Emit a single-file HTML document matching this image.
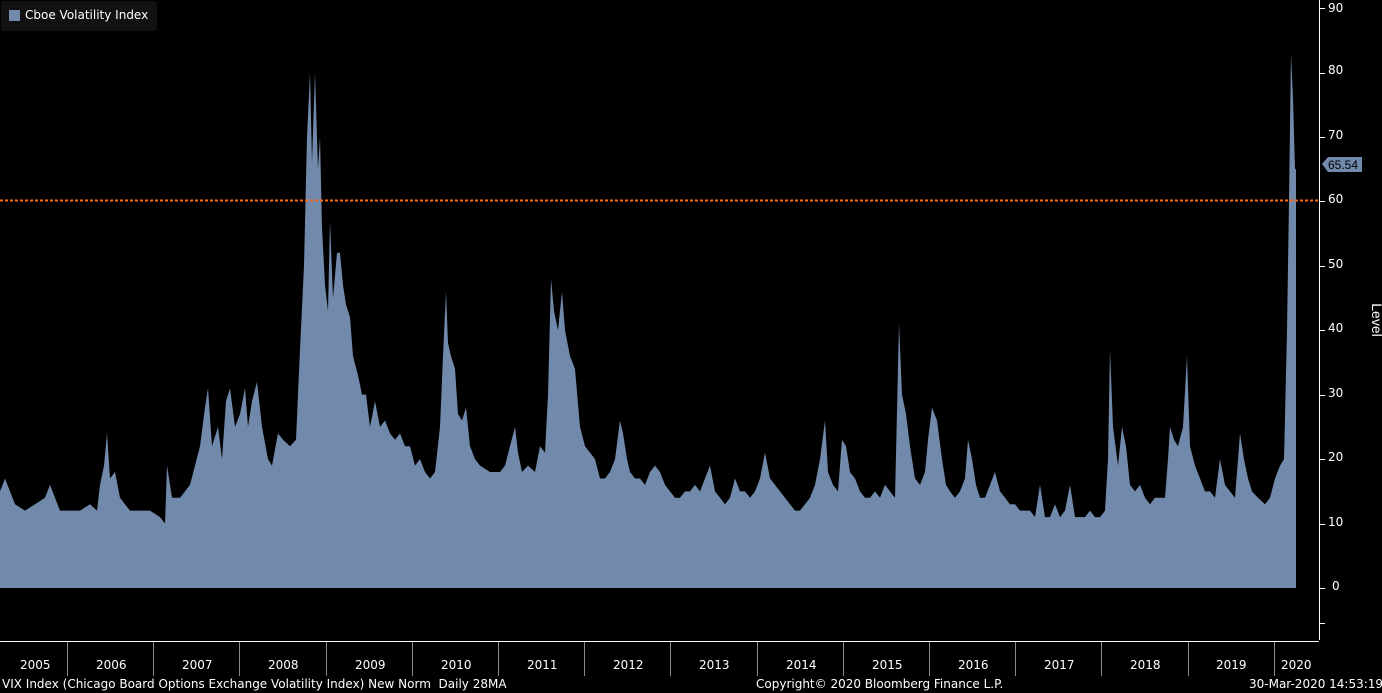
<!DOCTYPE html>
<html><head><meta charset="utf-8"><style>
body{margin:0;background:#000;width:1382px;height:693px;overflow:hidden;font-family:"DejaVu Sans","Liberation Sans",sans-serif;color:#fff}
.t{position:absolute;font-size:12px;white-space:nowrap}
</style></head><body>
<svg width="1382" height="693" style="position:absolute;left:0;top:0">
<g transform="translate(0,588) scale(1,-6.444)">
<polygon fill="#7189aa" points="0,0 0,15 5,17 10,15 15,13 25,12 35,13 45,14 50,16 55,14 60,12 70,12 80,12 90,13 97,12 100,16 104,19 107,24 110,17 115,18 120,14 125,13 130,12 140,12 150,12 160,11 165,10 167,19 172,14 180,14 190,16 200,22 205,28 208,31 212,22 218,25 222,20 226,29 230,31 235,25 240,27 245,31 248,25 252,29 257,32 262,25 268,20 272,19 278,24 283,23 290,22 296,23 300,37 304,50 307,70 310,80 312,66 315,80 318,65 320,70 322,56 325,47 328,43 330,57 333,45 337,52 340,52 343,47 346,44 350,42 353,36 358,33 362,30 366,30 370,25 375,29 380,25 385,26 390,24 395,23 400,24 405,22 410,22 415,19 420,20 425,18 430,17 435,18 440,25 443,36 446,46 448,38 451,36 455,34 458,27 462,26 466,28 470,22 475,20 480,19 490,18 500,18 505,19 510,22 515,25 518,21 522,18 528,19 535,18 540,22 545,21 548,30 551,48 554,43 558,40 562,46 565,40 570,36 575,34 580,25 585,22 590,21 595,20 600,17 605,17 610,18 615,20 620,26 623,24 627,20 630,18 635,17 640,17 645,16 650,18 655,19 660,18 665,16 670,15 675,14 680,14 685,15 690,15 695,16 700,15 705,17 710,19 715,15 720,14 725,13 730,14 735,17 740,15 745,15 750,14 755,15 760,17 765,21 770,17 775,16 780,15 785,14 790,13 795,12 800,12 805,13 810,14 815,16 820,20 825,26 828,18 833,16 838,15 842,23 846,22 850,18 855,17 860,15 865,14 870,14 875,15 880,14 885,16 890,15 895,14 899,41 902,30 906,27 910,22 915,17 920,16 925,18 928,23 932,28 937,26 942,20 946,16 950,15 955,14 960,15 965,17 968,23 972,20 976,16 980,14 985,14 990,16 995,18 1000,15 1005,14 1010,13 1015,13 1020,12 1025,12 1030,12 1035,11 1040,16 1045,11 1050,11 1055,13 1060,11 1065,12 1070,16 1075,11 1080,11 1085,11 1090,12 1095,11 1100,11 1105,12 1108,20 1110,37 1113,25 1118,19 1122,25 1126,22 1130,16 1135,15 1140,16 1145,14 1150,13 1155,14 1160,14 1165,14 1168,20 1170,25 1174,23 1178,22 1183,25 1187,36 1190,22 1195,19 1200,17 1205,15 1210,15 1215,14 1220,20 1225,16 1230,15 1235,14 1240,24 1244,20 1248,17 1252,15 1258,14 1265,13 1270,14 1275,17 1280,19 1284,20 1287,40 1289,60 1291,83 1293,76 1295,65 1296,65 1296,0"/>
</g>
<line x1="0" y1="200.5" x2="1318" y2="200.5" stroke="#ff6a13" stroke-width="2" stroke-dasharray="3,2"/>
<line x1="1319.5" y1="0" x2="1319.5" y2="640" stroke="#fff" stroke-width="1"/>
<g stroke="#fff">
<line x1="1319" y1="8.5" x2="1325" y2="8.5"/><line x1="1319" y1="73.5" x2="1325" y2="73.5"/><line x1="1319" y1="137.5" x2="1325" y2="137.5"/><line x1="1319" y1="201.5" x2="1325" y2="201.5"/><line x1="1319" y1="266.5" x2="1325" y2="266.5"/><line x1="1319" y1="330.5" x2="1325" y2="330.5"/><line x1="1319" y1="395.5" x2="1325" y2="395.5"/><line x1="1319" y1="459.5" x2="1325" y2="459.5"/><line x1="1319" y1="524.5" x2="1325" y2="524.5"/><line x1="1319" y1="588.5" x2="1325" y2="588.5"/><line x1="1319" y1="623.5" x2="1325" y2="623.5"/>
<line x1="0" y1="641.5" x2="1319" y2="641.5"/>
</g>
<g stroke="#888"><line x1="67.5" y1="642" x2="67.5" y2="676"/><line x1="153.5" y1="642" x2="153.5" y2="676"/><line x1="239.5" y1="642" x2="239.5" y2="676"/><line x1="326.5" y1="642" x2="326.5" y2="676"/><line x1="412.5" y1="642" x2="412.5" y2="676"/><line x1="498.5" y1="642" x2="498.5" y2="676"/><line x1="584.5" y1="642" x2="584.5" y2="676"/><line x1="670.5" y1="642" x2="670.5" y2="676"/><line x1="757.5" y1="642" x2="757.5" y2="676"/><line x1="843.5" y1="642" x2="843.5" y2="676"/><line x1="929.5" y1="642" x2="929.5" y2="676"/><line x1="1015.5" y1="642" x2="1015.5" y2="676"/><line x1="1101.5" y1="642" x2="1101.5" y2="676"/><line x1="1188.5" y1="642" x2="1188.5" y2="676"/><line x1="1274.5" y1="642" x2="1274.5" y2="676"/></g>
<polygon points="1322,164 1328,157 1362,157 1362,172 1328,172" fill="#7189aa"/>
<text x="1328" y="169" font-size="12" fill="#000" font-family="Liberation Sans,sans-serif">65.54</text>
<text x="1372" y="320" font-size="14" fill="#fff" transform="rotate(90 1372 320)" text-anchor="middle" font-family="Liberation Sans,sans-serif">Level</text>
</svg>
<div style="position:absolute;left:1px;top:1px;width:156px;height:30px;background:#111;border-radius:3px"></div>
<div style="position:absolute;left:9px;top:10px;width:11px;height:11px;background:#7189aa"></div>
<div class="t" style="left:25px;top:8px">Cboe Volatility Index</div>
<div class="t" style="left:1328px;top:1px">90</div><div class="t" style="left:1328px;top:63px">80</div><div class="t" style="left:1328px;top:128px">70</div><div class="t" style="left:1328px;top:192px">60</div><div class="t" style="left:1328px;top:257px">50</div><div class="t" style="left:1328px;top:321px">40</div><div class="t" style="left:1328px;top:386px">30</div><div class="t" style="left:1328px;top:450px">20</div><div class="t" style="left:1328px;top:515px">10</div><div class="t" style="left:1332px;top:579px">0</div>
<div class="t" style="left:20px;top:658px">2005</div><div class="t" style="left:96px;top:658px">2006</div><div class="t" style="left:182px;top:658px">2007</div><div class="t" style="left:268px;top:658px">2008</div><div class="t" style="left:355px;top:658px">2009</div><div class="t" style="left:441px;top:658px">2010</div><div class="t" style="left:527px;top:658px">2011</div><div class="t" style="left:613px;top:658px">2012</div><div class="t" style="left:699px;top:658px">2013</div><div class="t" style="left:786px;top:658px">2014</div><div class="t" style="left:872px;top:658px">2015</div><div class="t" style="left:958px;top:658px">2016</div><div class="t" style="left:1044px;top:658px">2017</div><div class="t" style="left:1130px;top:658px">2018</div><div class="t" style="left:1216px;top:658px">2019</div><div class="t" style="left:1281px;top:658px">2020</div>
<div class="t" style="left:2px;top:677px">VIX Index (Chicago Board Options Exchange Volatility Index) New Norm &nbsp;Daily 28MA</div>
<div class="t" style="left:756px;top:677px">Copyright© 2020 Bloomberg Finance L.P.</div>
<div class="t" style="left:1249px;top:677px">30-Mar-2020 14:53:19</div>
</body></html>
